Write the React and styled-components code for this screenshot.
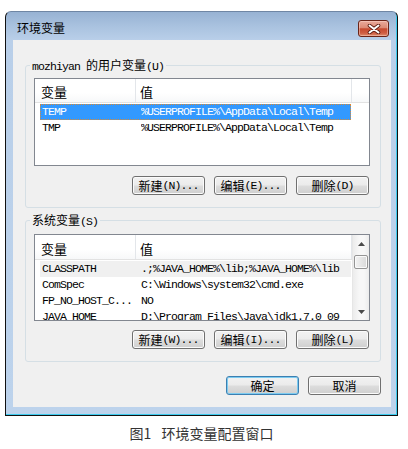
import React from "react";
import styled, { createGlobalStyle, css } from "styled-components";

const GlobalStyle = createGlobalStyle`
  html, body { margin: 0; padding: 0; background: #fff; }
  body { font-family: "Noto Sans CJK SC", "Liberation Sans", sans-serif; color: #000; }
  * { box-sizing: border-box; }
`;

const Page = styled.div`
  width: 408px;
  height: 449px;
  overflow: hidden;
  padding: 11px 0 0 5px;
  display: flex;
  flex-direction: column;
  align-items: flex-start;
`;

const Window = styled.div`
  width: 393px;
  height: 405px;
  flex: none;
  display: flex;
  flex-direction: column;
  border: 1px solid #111;
  border-top-color: #6f86a4;
  border-radius: 6px 6px 0 0;
  background: linear-gradient(to bottom, #97b2d3 0px, #a9c2df 14px, #b9cfe9 28px, #bdd3ec 100%);
  box-shadow: inset -1px -1px 0 #3ccbee;
`;

const TitleBar = styled.div`
  height: 28px;
  flex: none;
  display: flex;
  align-items: flex-start;
  justify-content: space-between;
  padding: 8px 8px 0 11px;
`;

const Title = styled.div`
  font-size: 12px;
  line-height: 16px;
  color: #000;
`;

const CloseButton = styled.div`
  width: 31px;
  height: 17px;
  border: 1px solid #6a2418;
  border-radius: 3px;
  background: linear-gradient(to bottom, #e9aa9b 0%, #dc8a75 45%, #c64a2f 52%, #cf5d42 80%, #dd8a6a 100%);
  box-shadow: inset 0 0 0 1px rgba(255, 220, 210, 0.45);
  display: flex;
  align-items: center;
  justify-content: center;
`;

const Client = styled.div`
  flex: 1;
  margin: 0 6px 8px 7px;
  background: #f0f0f0;
  display: flex;
  flex-direction: column;
  padding: 19px 10px 0 12px;
`;

const Group = styled.fieldset`
  margin: 0 0 ${(p) => p.$mb || 0}px 0;
  padding: 0;
  min-width: 0;
  border: 1px solid #d5dfe5;
  border-radius: 3px;
`;

const GroupBody = styled.div`
  padding: ${(p) => p.$pt}px 10px 12px 8px;
  display: flex;
  flex-direction: column;
`;

const Legend = styled.legend`
  margin-left: 4px;
  padding: 0 2px;
  font-size: 12px;
  line-height: 12px;
  height: 12px;
  white-space: pre;
`;

const Mono = styled.span`
  font-family: "Liberation Mono", "Courier New", monospace;
  font-size: 11.5px;
  letter-spacing: -0.9px;
`;

const ListView = styled.div`
  height: ${(p) => p.$h}px;
  border: 1px solid #828790;
  background: #fff;
  display: flex;
  overflow: hidden;
`;

const ListBody = styled.div`
  flex: 1;
  min-width: 0;
  display: flex;
  flex-direction: column;
`;

const Header = styled.div`
  height: ${(p) => p.$h}px;
  flex: none;
  display: flex;
  border-bottom: 1px solid #e2e2e2;
  background: linear-gradient(to bottom, #ffffff 0%, #ffffff 60%, #f7f8f9 100%);
`;

const HeaderCell = styled.div`
  width: ${(p) => p.$w}px;
  flex: none;
  border-right: 1px solid #e3e6ea;
  padding: 2px 0 0 ${(p) => p.$pl}px;
  font-size: 13px;
  display: flex;
  align-items: center;
`;

const HeaderRest = styled.div`
  flex: 1;
`;

const Rows = styled.div`
  padding-top: 1px;
  display: flex;
  flex-direction: column;
`;

const Row = styled.div`
  width: 311px;
  height: 16px;
  margin-left: 5px;
  display: grid;
  grid-template-columns: 101px 1fr;
  align-items: center;
  font-family: "Liberation Mono", "Courier New", monospace;
  font-size: 11.5px;
  letter-spacing: -0.9px;
  line-height: 16px;
  white-space: pre;
  overflow: hidden;
  ${(p) =>
    p.$selected &&
    css`
      background: #3399ff;
      color: #fff;
      outline: 1px dotted #d98a35;
      outline-offset: -1px;
    `}
  ${(p) =>
    p.$inactive &&
    css`
      background: #f0f0f0;
    `}
`;

const Cell = styled.span`
  padding-left: ${(p) => p.$pl || 0}px;
  overflow: hidden;
`;

const ScrollBar = styled.div`
  width: 17px;
  flex: none;
  background: linear-gradient(to right, #ececec, #f7f7f7 40%, #f7f7f7 70%, #ececec);
  border-left: 1px solid #e6e6e6;
  display: flex;
  flex-direction: column;
  align-items: center;
`;

const ArrowBox = styled.div`
  height: 17px;
  width: 100%;
  flex: none;
  display: flex;
  align-items: center;
  justify-content: center;
`;

const Track = styled.div`
  flex: 1;
  width: 100%;
  padding: 3px 1px 0 1px;
`;

const Thumb = styled.div`
  height: 14px;
  border: 1px solid #959595;
  border-radius: 2px;
  background: linear-gradient(to right, #f3f3f3, #e6e6e6 50%, #d9d9d9);
  box-shadow: inset 0 0 0 1px #fafafa;
`;

const ButtonRow = styled.div`
  margin-top: ${(p) => p.$mt}px;
  padding-right: ${(p) => p.$pr || 0}px;
  display: flex;
  justify-content: flex-end;
  gap: 9px;
`;

const Button = styled.div`
  width: 73px;
  height: 19px;
  border: 1px solid #707070;
  border-radius: 3px;
  background: linear-gradient(to bottom, #f2f2f2 0%, #ebebeb 48%, #dddddd 52%, #cfcfcf 100%);
  box-shadow: inset 0 0 0 1px #fbfbfb;
  font-size: 12px;
  line-height: 17px;
  color: #000;
  display: flex;
  align-items: center;
  justify-content: center;
  white-space: pre;
  ${(p) =>
    p.$default &&
    css`
      border-color: #3c7fb1;
      box-shadow: inset 0 0 0 1px #7ccbf0;
    `}
`;

const Caption = styled.div`
  width: 393px;
  margin-top: 9px;
  font-size: 14px;
  line-height: 16px;
  color: #333;
  display: flex;
  justify-content: center;
`;

const CaptionGap = styled.span`
  width: 10px;
`;

const CloseGlyph = () => (
  <svg width="14" height="10" viewBox="0 0 14 10">
    <path d="M2.5 1.5 L11.5 8.5 M11.5 1.5 L2.5 8.5" stroke="#5a1a10" strokeWidth="3.6" strokeLinecap="round" />
    <path d="M2.5 1.5 L11.5 8.5 M11.5 1.5 L2.5 8.5" stroke="#fff" strokeWidth="2" strokeLinecap="round" />
  </svg>
);

const UpArrow = () => (
  <svg width="7" height="4" viewBox="0 0 7 4">
    <path d="M0 4 L3.5 0 L7 4 Z" fill="#4a4a4a" />
  </svg>
);

const DownArrow = () => (
  <svg width="7" height="4" viewBox="0 0 7 4">
    <path d="M0 0 L3.5 4 L7 0 Z" fill="#4a4a4a" />
  </svg>
);

const userVars = [
  { name: "TEMP", value: "%USERPROFILE%\\AppData\\Local\\Temp", selected: true },
  { name: "TMP", value: "%USERPROFILE%\\AppData\\Local\\Temp" },
];

const sysVars = [
  { name: "CLASSPATH", value: ".;%JAVA_HOME%\\lib;%JAVA_HOME%\\lib", inactive: true },
  { name: "ComSpec", value: "C:\\Windows\\system32\\cmd.exe" },
  { name: "FP_NO_HOST_C...", value: "NO" },
  { name: "JAVA_HOME", value: "D:\\Program Files\\Java\\jdk1.7.0_09" },
];

const ListHeader = ({ h }) => (
  <Header $h={h}>
    <HeaderCell $w={101} $pl={6}>变量</HeaderCell>
    <HeaderCell $w={216} $pl={4}>值</HeaderCell>
    <HeaderRest />
  </Header>
);

const VarRows = ({ items }) => (
  <Rows>
    {items.map((v) => (
      <Row key={v.name} $selected={v.selected} $inactive={v.inactive}>
        <Cell $pl={2}>{v.name}</Cell>
        <Cell>{v.value}</Cell>
      </Row>
    ))}
  </Rows>
);

const Label = ({ cjk, rest }) => (
  <>
    {cjk}
    <Mono>{rest}</Mono>
  </>
);

export default function App() {
  return (
    <>
      <GlobalStyle />
      <Page>
        <Window>
          <TitleBar>
            <Title>环境变量</Title>
            <CloseButton>
              <CloseGlyph />
            </CloseButton>
          </TitleBar>
          <Client>
            <Group $mb={6}>
              <Legend>
                <Mono>mozhiyan </Mono>的用户变量<Mono>(U)</Mono>
              </Legend>
              <GroupBody $pt={7}>
                <ListView $h={88}>
                  <ListBody>
                    <ListHeader h={24} />
                    <VarRows items={userVars} />
                  </ListBody>
                </ListView>
                <ButtonRow $mt={10} $pr={1}>
                  <Button><Label cjk="新建" rest="(N)..." /></Button>
                  <Button><Label cjk="编辑" rest="(E)..." /></Button>
                  <Button><Label cjk="删除" rest="(D)" /></Button>
                </ButtonRow>
              </GroupBody>
            </Group>
            <Group>
              <Legend>
                系统变量<Mono>(S)</Mono>
              </Legend>
              <GroupBody $pt={8}>
                <ListView $h={87}>
                  <ListBody>
                    <ListHeader h={25} />
                    <VarRows items={sysVars} />
                  </ListBody>
                  <ScrollBar>
                    <ArrowBox>
                      <UpArrow />
                    </ArrowBox>
                    <Track>
                      <Thumb />
                    </Track>
                    <ArrowBox>
                      <DownArrow />
                    </ArrowBox>
                  </ScrollBar>
                </ListView>
                <ButtonRow $mt={9} $pr={1}>
                  <Button><Label cjk="新建" rest="(W)..." /></Button>
                  <Button><Label cjk="编辑" rest="(I)..." /></Button>
                  <Button><Label cjk="删除" rest="(L)" /></Button>
                </ButtonRow>
              </GroupBody>
            </Group>
            <ButtonRow $mt={14}>
              <Button $default>确定</Button>
              <Button>取消</Button>
            </ButtonRow>
          </Client>
        </Window>
        <Caption>
          图1<CaptionGap />环境变量配置窗口
        </Caption>
      </Page>
    </>
  );
}
